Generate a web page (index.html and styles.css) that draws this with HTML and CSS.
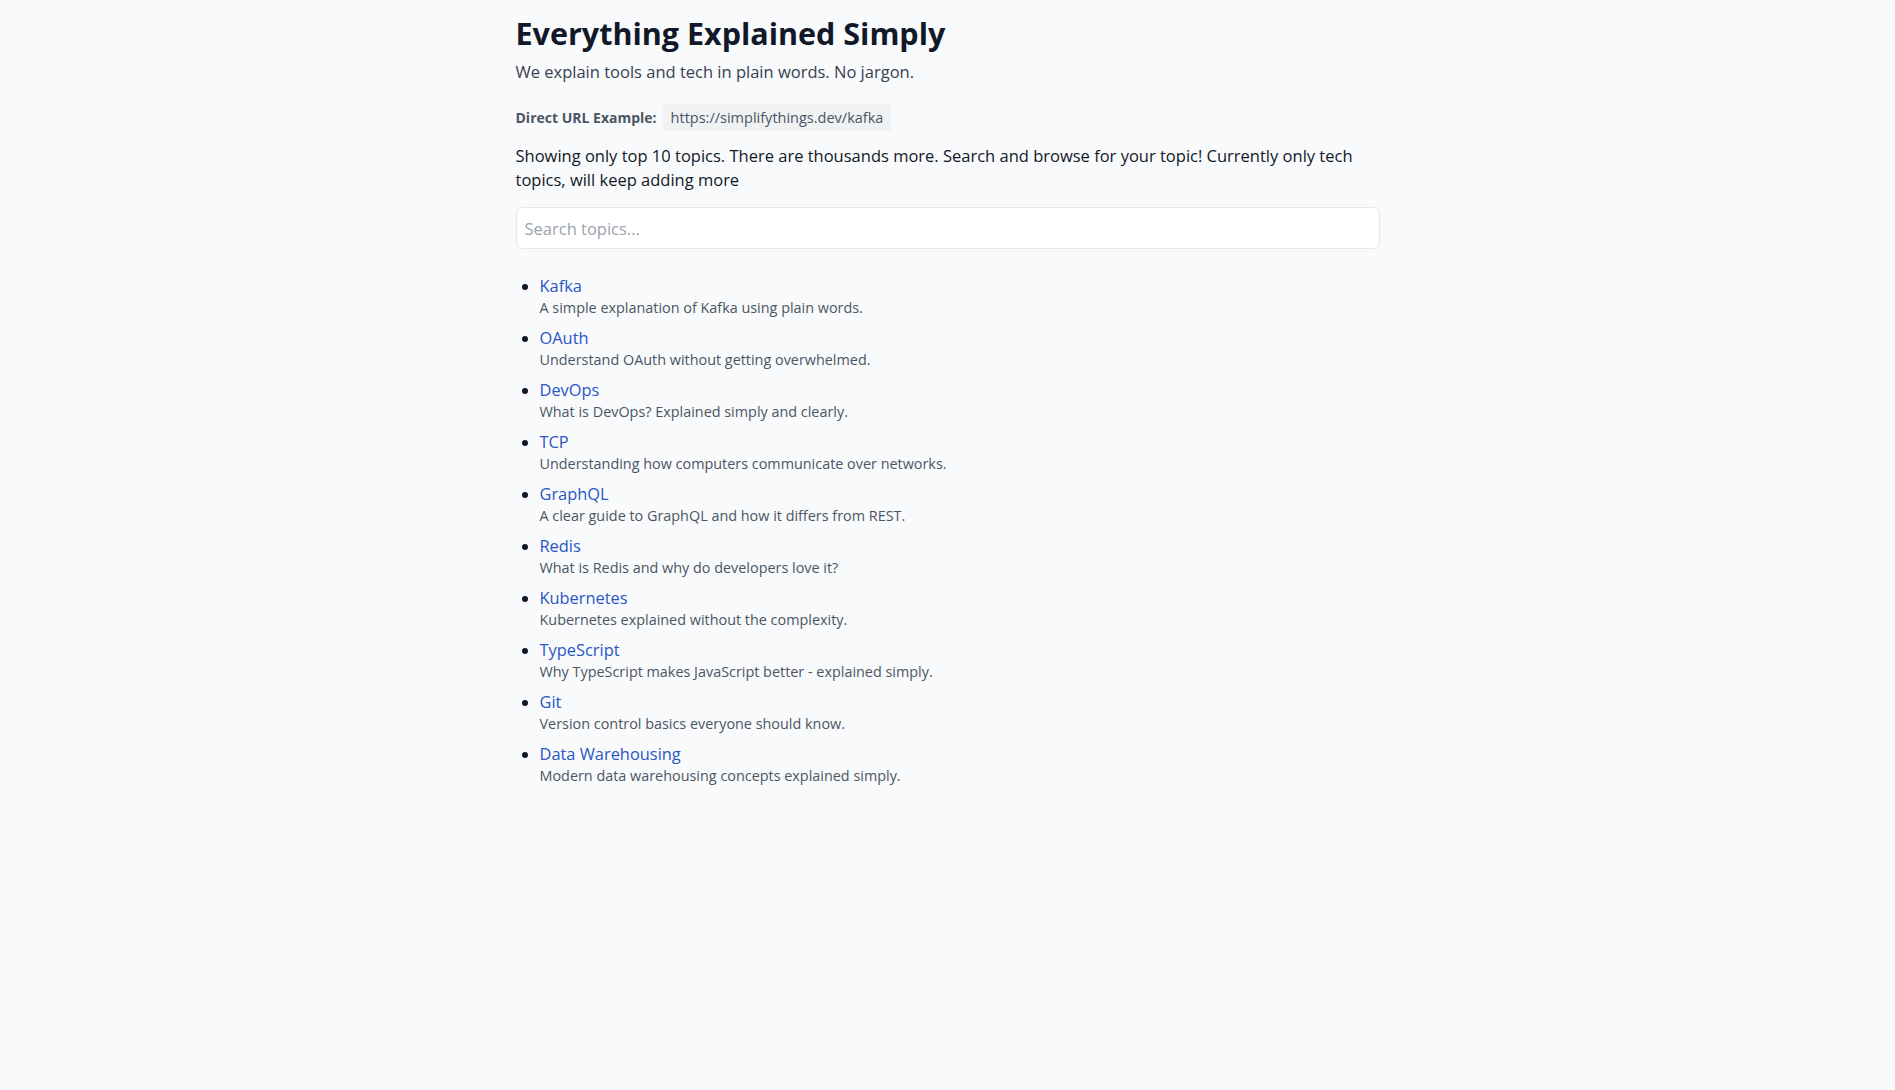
FILE: index.html
```html
<!DOCTYPE html>
<html lang="en">
<head>
<meta charset="utf-8">
<title>Everything Explained Simply</title>
<link rel="stylesheet" href="styles.css">
</head>
<body>
<main class="container">
  <h1 class="title">Everything Explained Simply</h1>
  <p class="subtitle">We explain tools and tech in plain words. No jargon.</p>
  <div class="direct">
    <span class="direct-label">Direct URL Example:</span>
    <code class="direct-url">https://simplifythings.dev/kafka</code>
  </div>
  <p class="notice">Showing only top 10 topics. There are thousands more. Search and browse for your topic! Currently only tech topics, will keep adding more</p>
  <input class="search" type="text" placeholder="Search topics...">
  <ul class="topics">
    <li class="topic"><a class="topic-link" href="#">Kafka</a><div class="topic-desc">A simple explanation of Kafka using plain words.</div></li>
    <li class="topic"><a class="topic-link" href="#">OAuth</a><div class="topic-desc">Understand OAuth without getting overwhelmed.</div></li>
    <li class="topic"><a class="topic-link" href="#">DevOps</a><div class="topic-desc">What is DevOps? Explained simply and clearly.</div></li>
    <li class="topic"><a class="topic-link" href="#">TCP</a><div class="topic-desc">Understanding how computers communicate over networks.</div></li>
    <li class="topic"><a class="topic-link" href="#">GraphQL</a><div class="topic-desc">A clear guide to GraphQL and how it differs from REST.</div></li>
    <li class="topic"><a class="topic-link" href="#">Redis</a><div class="topic-desc">What is Redis and why do developers love it?</div></li>
    <li class="topic"><a class="topic-link" href="#">Kubernetes</a><div class="topic-desc">Kubernetes explained without the complexity.</div></li>
    <li class="topic"><a class="topic-link" href="#">TypeScript</a><div class="topic-desc">Why TypeScript makes JavaScript better - explained simply.</div></li>
    <li class="topic"><a class="topic-link" href="#">Git</a><div class="topic-desc">Version control basics everyone should know.</div></li>
    <li class="topic"><a class="topic-link" href="#">Data Warehousing</a><div class="topic-desc">Modern data warehousing concepts explained simply.</div></li>
  </ul>
</main>
</body>
</html>
```

FILE: styles.css
```css
* { box-sizing: border-box; }
html, body {
  margin: 0;
  background: #f9fafb;
}
body {
  font-family: "Open Sans", "Noto Sans", sans-serif;
  color: #111827;
}
.container {
  width: 864px;
  margin: 0 auto;
  padding-top: 14px;
}
.title {
  margin: 0;
  font-size: 30.5px;
  line-height: 38px;
  font-weight: 700;
  color: #111827;
}
.subtitle {
  margin: 7px 0 0;
  font-size: 16.5px;
  line-height: 26px;
  color: #374151;
}
.direct {
  display: flex;
  align-items: center;
  gap: 6px;
  margin-top: 19px;
  font-size: 14px;
}
.direct-label {
  font-weight: 700;
  color: #4b5563;
}
.direct-url {
  font-family: inherit;
  background: #f1f2f4;
  color: #4b5563;
  padding: 4px 8px;
  border-radius: 4px;
  font-size: 14.5px;
}
.notice {
  margin: 13px 0 0;
  font-size: 16.5px;
  line-height: 24px;
  color: #111827;
}
.search {
  display: block;
  width: 100%;
  height: 42px;
  margin-top: 15px;
  padding: 0 8px;
  border: 1px solid #e5e7eb;
  border-radius: 6px;
  background: #fff;
  font-family: inherit;
  font-size: 16.5px;
  color: #111827;
}
.search::placeholder { color: #9ca3af; }
.topics {
  margin: 26px 0 0;
  padding-left: 24px;
}
.topic {
  margin-bottom: 8px;
}
.topic-link {
  font-size: 16.4px;
  line-height: 22px;
  color: #2a56c6;
  text-decoration: none;
}
.topic-desc {
  font-size: 14.4px;
  line-height: 22px;
  color: #4b5563;
}
```
